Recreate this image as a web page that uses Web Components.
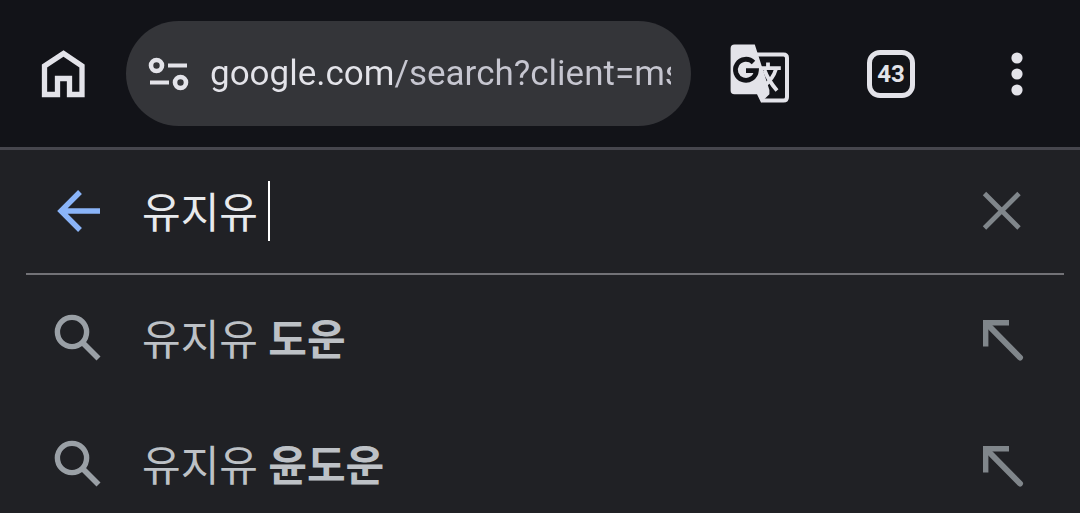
<!DOCTYPE html>
<html lang="ko">
<head>
<meta charset="utf-8">
<meta name="viewport" content="width=device-width, initial-scale=1">
<title>유지유 - Google</title>
<style>
  body {
    margin: 0;
    height: 100vh;
    overflow: hidden;
    background: #202125;
    font-family: Roboto, "Noto Sans CJK KR", sans-serif;
  }
</style>
</head>
<body>
<browser-bar url="google.com/search?client=ms" tabs="43"></browser-bar>
<search-panel query="유지유 ">
  <search-suggestion>유지유 <b>도운</b></search-suggestion>
  <search-suggestion>유지유 <b>윤도운</b></search-suggestion>
</search-panel>

<script>
// Shared by every shadow root
const base = `
  button {
    display: flex;
    align-items: center;
    justify-content: center;
    flex: none;
    margin: 0;
    padding: 0;
    border: 0;
    background: none;
    color: inherit;
    font: inherit;
    cursor: pointer;
  }
  input {
    margin: 0;
    padding: 0;
    border: 0;
    outline: 0;
    background: none;
    color: inherit;
    font: inherit;
  }
`;

const icons = {
  home: `<path d="M5.5 44.5V16L24.5 3.5L43 16V44.5H30.5V28.5H18.5V44.5Z" stroke-width="5.3"/>`,
  tune: `<circle cx="12.5" cy="15.5" r="5.5" stroke-width="4.6"/>
         <circle cx="36.5" cy="32.5" r="5.5" stroke-width="4.6"/>
         <path d="M24 15.5H43M6 32.5H25" stroke-width="4"/>`,
  back: `<path d="M46 24H8M26 5L7 24L26 43" stroke-width="5.4"/>`,
  close: `<path d="M6.5 6.5L41 41M41 6.5L6.5 41" stroke-width="4.8"/>`,
  search: `<circle cx="18" cy="18" r="14.6" stroke-width="5.4"/>
           <path d="M28.5 28.5L44.5 44.5" stroke-width="5.6"/>`,
  fill: `<path d="M31 8.7H7.7V32.5" stroke-width="5.4"/>
         <path d="M9 10L42 43.5" stroke-width="6" stroke-linecap="round"/>`,
};

class UiIcon extends HTMLElement {
  constructor() {
    super();
    this.attachShadow({mode: 'open'});
  }

  connectedCallback() {
    this.shadowRoot.innerHTML = `
      <style>
        :host { display: block; flex: none; width: 48px; height: 48px; }
        svg { display: block; width: 100%; height: 100%; }
      </style>
      <svg viewBox="0 0 48 48" fill="none" stroke="currentColor" aria-hidden="true">${icons[this.getAttribute('name')]}</svg>
    `;
  }
}

class BrowserBar extends HTMLElement {
  constructor() {
    super();
    this.attachShadow({mode: 'open'});
  }

  connectedCallback() {
    this.shadowRoot.innerHTML = `
      <style>
        ${base}
        :host {
          display: flex;
          align-items: center;
          height: 147px;
          border-bottom: 3px solid #46464d;
          background: #121318;
          color: #e3e3e9;
        }
        button { height: 96px; }
        .home { width: 126px; }
        .translate { width: 138px; }
        .tabs { width: 124px; }
        .menu { width: 127px; }
        .address {
          display: flex;
          align-items: center;
          gap: 18px;
          flex: 1;
          min-width: 0;
          height: 105px;
          box-sizing: border-box;
          padding: 0 20px 0 18px;
          border-radius: 53px;
          background: #343539;
        }
        /* host name is brighter than the rest of the address */
        .address input {
          flex: 1;
          min-width: 0;
          font-size: 35px;
          line-height: 48px;
          background: linear-gradient(90deg, #e3e3e9 185px, #c6c6d0 185px);
          -webkit-background-clip: text;
          background-clip: text;
          -webkit-text-fill-color: transparent;
        }
        .count {
          display: flex;
          align-items: center;
          justify-content: center;
          width: 48px;
          height: 48px;
          box-sizing: border-box;
          border: 5px solid;
          border-radius: 13px;
          font-size: 24px;
          font-weight: 700;
          line-height: 24px;
        }
        svg { display: block; }
      </style>
      <button class="home" aria-label="Home"><ui-icon name="home"></ui-icon></button>
      <div class="address">
        <button aria-label="Site information"><ui-icon name="tune"></ui-icon></button>
        <input type="text" aria-label="Address" spellcheck="false" value="${this.getAttribute('url')}">
      </div>
      <button class="translate" aria-label="Translate">
        <svg width="60" height="60" viewBox="0 0 60 60" fill="none" aria-hidden="true">
          <path d="M27 10.5H53.5Q57 10.5 57 14V53Q57 56.5 53.5 56.5H31" stroke="currentColor" stroke-width="4"/>
          <path d="M4.5 .6H24.8L39.4 46V50.3L31 58.5L27 50.3H4.5Q.6 50.3 .6 46.5V4.5Q.6 .6 4.5 .6Z" fill="currentColor"/>
          <path d="M38 18.5V24M30 24.2H50.8M46 25Q43 35 34 42M34.5 26Q38 36 47 46.5" stroke="currentColor" stroke-width="3.8"/>
          <path d="M23.5 18.5A10.5 10.5 0 1 0 26.4 26.6H16" stroke="#121318" stroke-width="4.8"/>
        </svg>
      </button>
      <button class="tabs" aria-label="Tabs"><span class="count">${this.getAttribute('tabs')}</span></button>
      <button class="menu" aria-label="Menu">
        <svg width="12" height="44" viewBox="0 0 12 44" fill="currentColor" aria-hidden="true">
          <circle cx="6" cy="6" r="5.6"/><circle cx="6" cy="22" r="5.6"/><circle cx="6" cy="38" r="5.6"/>
        </svg>
      </button>
    `;
  }
}

class SearchPanel extends HTMLElement {
  constructor() {
    super();
    this.attachShadow({mode: 'open', delegatesFocus: true});
  }

  connectedCallback() {
    this.shadowRoot.innerHTML = `
      <style>
        ${base}
        :host { display: block; }
        form {
          display: flex;
          align-items: center;
          height: 121px;
          margin: 0 16px 0 26px;
          padding: 0 38px 2px 28px;
          border-bottom: 2px solid #727277;
        }
        .back { color: #8ab4f8; margin-right: 40px; }
        .clear { color: #80868b; margin-left: auto; }
        input {
          field-sizing: content;
          padding-top: 6px;
          color: #e8eaed;
          font-size: 42px;
          line-height: 60px;
          caret-color: transparent;
        }
        .caret { width: 2px; height: 60px; background: #fff; }
      </style>
      <form>
        <button class="back" type="button" aria-label="Back"><ui-icon name="back"></ui-icon></button>
        <input type="text" aria-label="Search" value="${this.getAttribute('query')}">
        <span class="caret"></span>
        <button class="clear" type="reset" aria-label="Clear"><ui-icon name="close"></ui-icon></button>
      </form>
      <slot></slot>
    `;
  }
}

class SearchSuggestion extends HTMLElement {
  constructor() {
    super();
    this.attachShadow({mode: 'open'});
    this.shadowRoot.innerHTML = `
      <style>
        ${base}
        :host {
          display: flex;
          align-items: center;
          height: 126px;
          padding: 0 54px;
          color: #bdc1c6;
          font-size: 42px;
          line-height: 60px;
        }
        a {
          display: flex;
          align-items: center;
          gap: 40px;
          flex: 1;
          color: inherit;
          text-decoration: none;
        }
        a ui-icon { color: #9aa0a6; }
        a span { padding-top: 6px; }
        button { color: #80868b; }
      </style>
      <a href="#"><ui-icon name="search"></ui-icon><span><slot></slot></span></a>
      <button aria-label="Fill in"><ui-icon name="fill"></ui-icon></button>
    `;
  }
}

window.customElements.define('ui-icon', UiIcon);
window.customElements.define('browser-bar', BrowserBar);
window.customElements.define('search-panel', SearchPanel);
window.customElements.define('search-suggestion', SearchSuggestion);
</script>
</body>
</html>
